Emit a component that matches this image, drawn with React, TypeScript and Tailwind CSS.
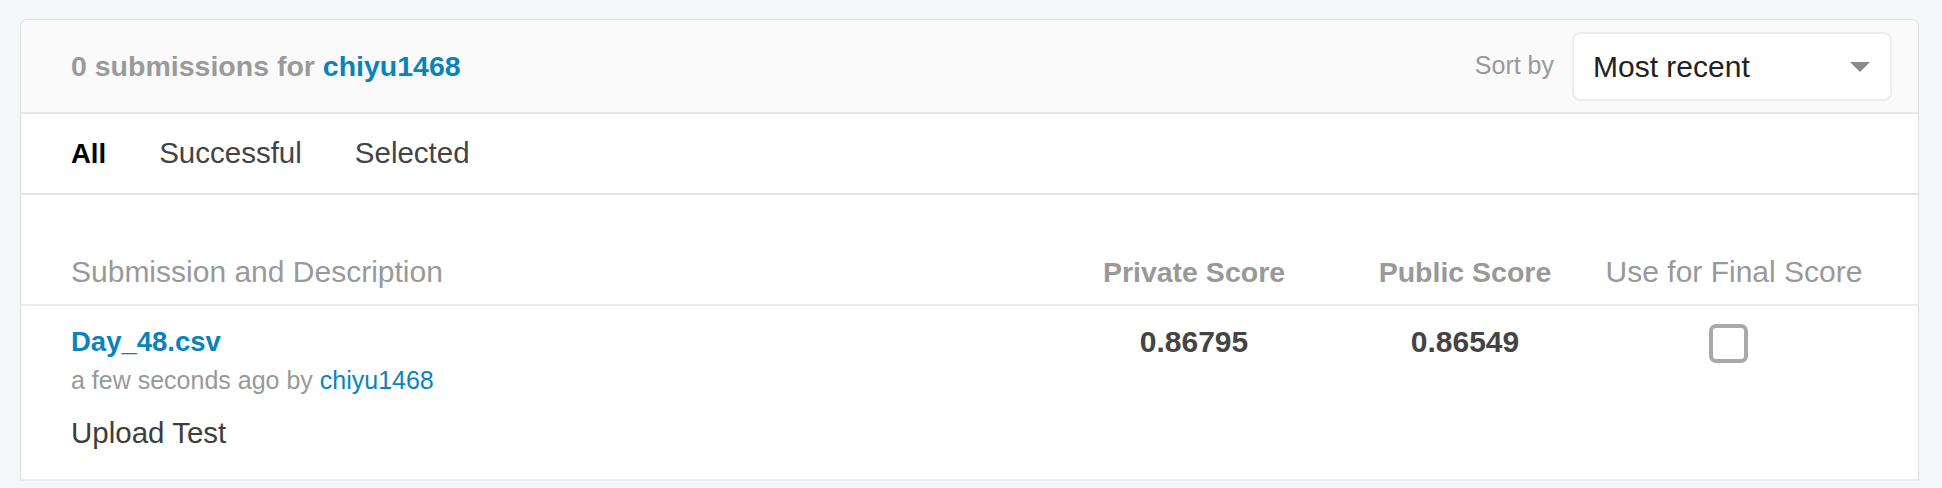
import { useState } from 'react';

const tabs = ['All', 'Successful', 'Selected'];
const cols = 'grid grid-cols-[1fr_272px_270px_268px] pl-[50px] pr-[50px]';

const SortSelect = () => (
  <div className="flex items-center gap-[18px]">
    <span className="text-[25px] text-[#999]">Sort by</span>
    <div className="relative flex h-[69px] w-[320px] items-center rounded-[8px] border-2 border-[#ececec] bg-white pl-[19px]">
      <span className="text-[30px] text-[#222]">Most recent</span>
      <div className="absolute right-[20px] top-[28px] h-0 w-0 border-x-[10px] border-t-[10px] border-x-transparent border-t-[#8a8a8a]" />
    </div>
  </div>
);

const App = () => {
  const [tab, setTab] = useState('All');
  const [selected, setSelected] = useState(false);

  return (
    <div className="min-h-screen bg-[#f4f7f8] pl-[20px] pr-[23px] pt-[19px] font-['Liberation_Sans',Arial,sans-serif]">
      <div className="rounded-t-[7px] border border-b-0 border-[#dfe0e1] bg-white">
        {/* Header */}
        <div className="flex h-[94px] items-center justify-between rounded-t-[7px] border-b-2 border-[#e8e8e8] bg-[#fafafa] pl-[50px] pr-[26px]">
          <h2 className="text-[28.5px] font-bold text-[#9a9a9a]">
            0 submissions for <span className="text-[#0a84b8]">chiyu1468</span>
          </h2>
          <SortSelect />
        </div>

        {/* Tabs */}
        <div className="flex h-[81px] items-center gap-[53px] border-b-2 border-[#e4e4e4] pl-[50px]">
          {tabs.map((t) => (
            <button
              key={t}
              onClick={() => setTab(t)}
              className={tab === t ? 'text-[27.5px] font-bold text-black' : 'text-[29.5px] text-[#444]'}>
              {t}
            </button>
          ))}
        </div>

        {/* Table head */}
        <div className={`${cols} items-end border-b-2 border-[#ececec] pb-[10px] pt-[54px] text-[#999]`}>
          <span className="text-[30px]">Submission and Description</span>
          <span className="text-center text-[28.5px] font-bold">Private Score</span>
          <span className="text-center text-[28.5px] font-bold">Public Score</span>
          <span className="text-center text-[30px]">Use for Final Score</span>
        </div>

        {/* Row */}
        <div className={`${cols} border-b-2 border-[#ececec] pb-[27px] pt-[16px]`}>
          <div className="flex flex-col">
            <a className="text-[27.5px] font-bold leading-[40px] text-[#0a84b8]">Day_48.csv</a>
            <span className="text-[25px] leading-[36px] text-[#999]">
              a few seconds ago by <span className="text-[#0a84b8]">chiyu1468</span>
            </span>
            <span className="mt-[16px] text-[29.5px] leading-[38px] text-[#3d3d3d]">Upload Test</span>
          </div>
          <span className="text-center text-[30px] font-bold leading-[40px] text-[#444]">0.86795</span>
          <span className="text-center text-[30px] font-bold leading-[40px] text-[#444]">0.86549</span>
          <div className="flex justify-center pr-[12px] pt-[2px]">
            <button
              onClick={() => setSelected(!selected)}
              className="h-[39px] w-[39px] rounded-[7px] border-4 border-[#a9a9a9] bg-white"
            />
          </div>
        </div>
      </div>
    </div>
  );
};

export default App;
